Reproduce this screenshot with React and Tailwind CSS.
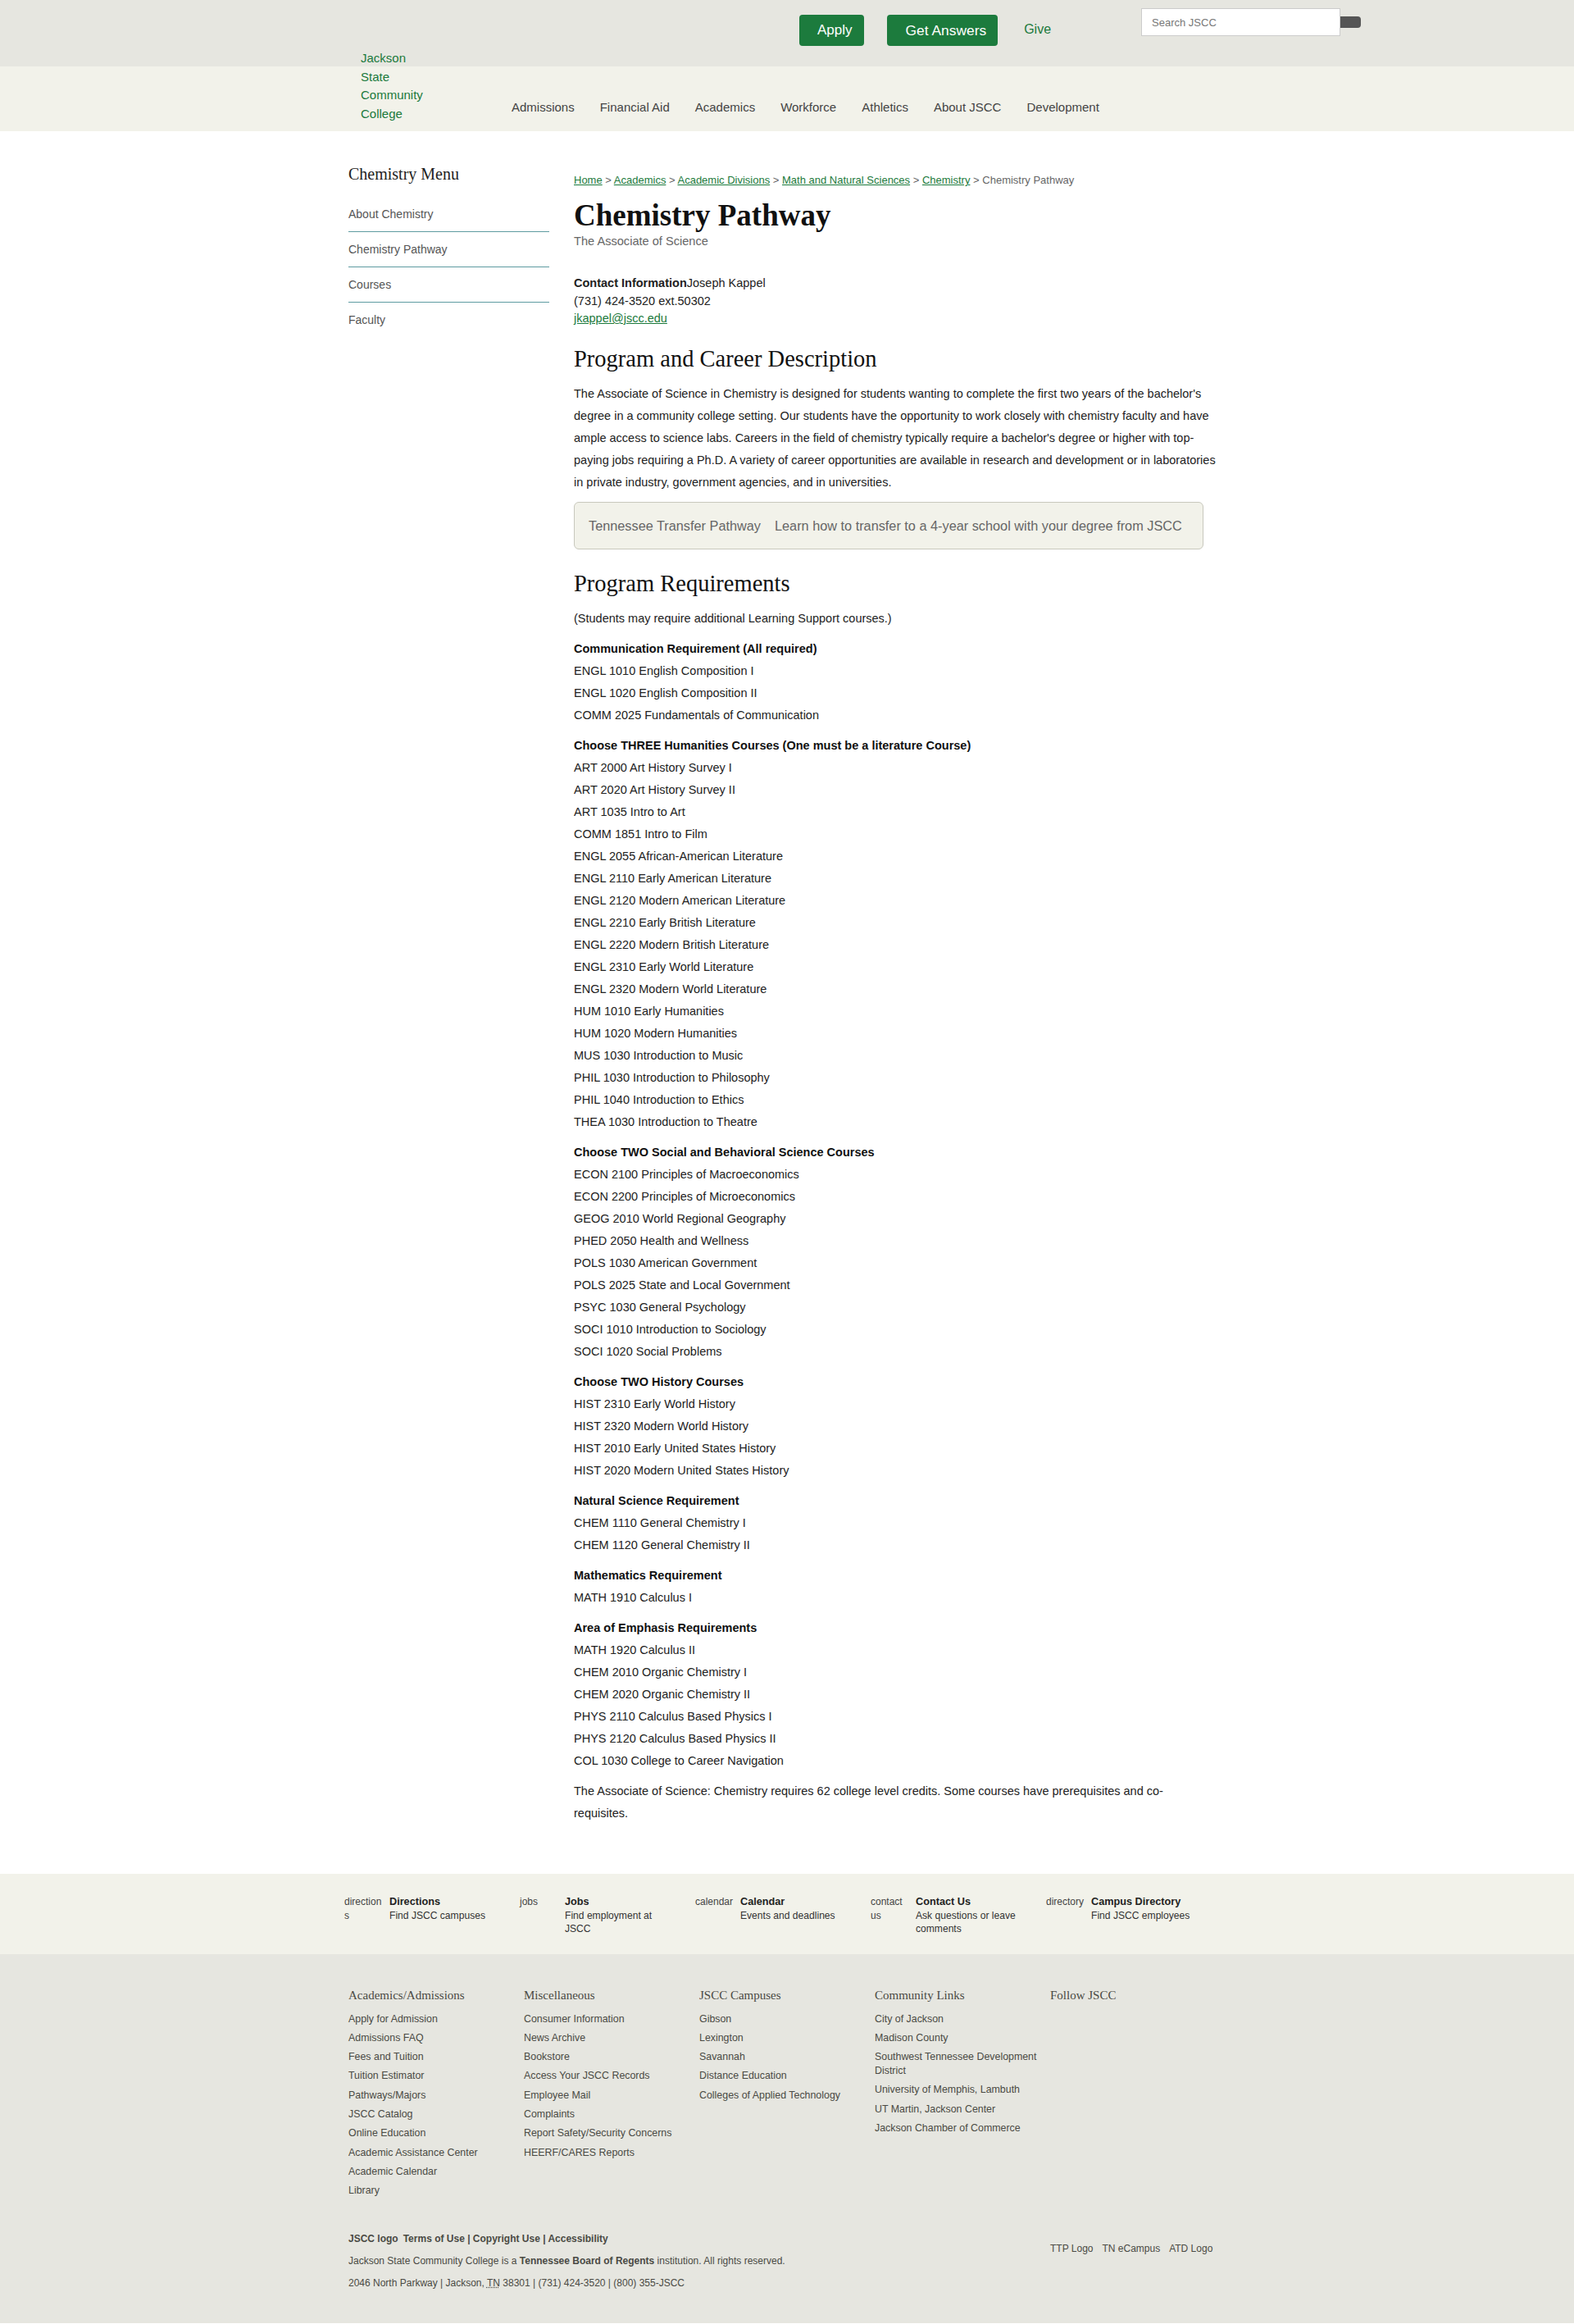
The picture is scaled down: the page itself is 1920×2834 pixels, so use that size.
import React from "react";

const sans = { fontFamily: '"Liberation Sans", Arial, sans-serif' };

const crumbs = [
  "Home",
  "Academics",
  "Academic Divisions",
  "Math and Natural Sciences",
  "Chemistry",
];

const sideMenu = ["About Chemistry", "Chemistry Pathway", "Courses", "Faculty"];

const navItems = [
  "Admissions",
  "Financial Aid",
  "Academics",
  "Workforce",
  "Athletics",
  "About JSCC",
  "Development",
];

const requirements = [
  {
    title: "Communication Requirement (All required)",
    courses: [
      "ENGL 1010 English Composition I",
      "ENGL 1020 English Composition II",
      "COMM 2025 Fundamentals of Communication",
    ],
  },
  {
    title: "Choose THREE Humanities Courses (One must be a literature Course)",
    courses: [
      "ART 2000 Art History Survey I",
      "ART 2020 Art History Survey II",
      "ART 1035 Intro to Art",
      "COMM 1851 Intro to Film",
      "ENGL 2055 African-American Literature",
      "ENGL 2110 Early American Literature",
      "ENGL 2120 Modern American Literature",
      "ENGL 2210 Early British Literature",
      "ENGL 2220 Modern British Literature",
      "ENGL 2310 Early World Literature",
      "ENGL 2320 Modern World Literature",
      "HUM 1010 Early Humanities",
      "HUM 1020 Modern Humanities",
      "MUS 1030 Introduction to Music",
      "PHIL 1030 Introduction to Philosophy",
      "PHIL 1040 Introduction to Ethics",
      "THEA 1030 Introduction to Theatre",
    ],
  },
  {
    title: "Choose TWO Social and Behavioral Science Courses",
    courses: [
      "ECON 2100 Principles of Macroeconomics",
      "ECON 2200 Principles of Microeconomics",
      "GEOG 2010 World Regional Geography",
      "PHED 2050 Health and Wellness",
      "POLS 1030 American Government",
      "POLS 2025 State and Local Government",
      "PSYC 1030 General Psychology",
      "SOCI 1010 Introduction to Sociology",
      "SOCI 1020 Social Problems",
    ],
  },
  {
    title: "Choose TWO History Courses",
    courses: [
      "HIST 2310 Early World History",
      "HIST 2320 Modern World History",
      "HIST 2010 Early United States History",
      "HIST 2020 Modern United States History",
    ],
  },
  {
    title: "Natural Science Requirement",
    courses: ["CHEM 1110 General Chemistry I", "CHEM 1120 General Chemistry II"],
  },
  {
    title: "Mathematics Requirement",
    courses: ["MATH 1910 Calculus I"],
  },
  {
    title: "Area of Emphasis Requirements",
    courses: [
      "MATH 1920 Calculus II",
      "CHEM 2010 Organic Chemistry I",
      "CHEM 2020 Organic Chemistry II",
      "PHYS 2110 Calculus Based Physics I",
      "PHYS 2120 Calculus Based Physics II",
      "COL 1030 College to Career Navigation",
    ],
  },
];

const quickLinks = [
  { icon: "directions", title: "Directions", text: "Find JSCC campuses" },
  { icon: "jobs", title: "Jobs", text: "Find employment at JSCC" },
  { icon: "calendar", title: "Calendar", text: "Events and deadlines" },
  { icon: "contact us", title: "Contact Us", text: "Ask questions or leave comments" },
  { icon: "directory", title: "Campus Directory", text: "Find JSCC employees" },
];

const footerCols = [
  {
    title: "Academics/Admissions",
    links: [
      "Apply for Admission",
      "Admissions FAQ",
      "Fees and Tuition",
      "Tuition Estimator",
      "Pathways/Majors",
      "JSCC Catalog",
      "Online Education",
      "Academic Assistance Center",
      "Academic Calendar",
      "Library",
    ],
  },
  {
    title: "Miscellaneous",
    links: [
      "Consumer Information",
      "News Archive",
      "Bookstore",
      "Access Your JSCC Records",
      "Employee Mail",
      "Complaints",
      "Report Safety/Security Concerns",
      "HEERF/CARES Reports",
    ],
  },
  {
    title: "JSCC Campuses",
    links: ["Gibson", "Lexington", "Savannah", "Distance Education", "Colleges of Applied Technology"],
  },
  {
    title: "Community Links",
    links: [
      "City of Jackson",
      "Madison County",
      "Southwest Tennessee Development District",
      "University of Memphis, Lambuth",
      "UT Martin, Jackson Center",
      "Jackson Chamber of Commerce",
    ],
  },
  { title: "Follow JSCC", links: [] },
];

const Header = () => (
  <header>
    <div className="bg-[#e6e6e0] h-[81px]">
      <div className="w-[1070px] mx-auto relative flex items-start">
        <a
          href="#"
          className="absolute left-[15px] top-[60px] w-[85px] text-[15px] leading-[22.5px] text-[#1b7a3c] z-10"
        >
          Jackson State Community College
        </a>
        <a
          href="#"
          className="shrink-0 ml-[550px] mt-[18px] h-[38px] flex items-center pl-[22px] pr-[14px] rounded-[4px] bg-[#1c7b3d] text-white text-[17px]"
        >
          Apply
        </a>
        <a
          href="#"
          className="shrink-0 ml-[28px] mt-[18px] h-[38px] flex items-center pl-[23px] pr-[14px] rounded-[4px] bg-[#1c7b3d] text-white text-[17.4px]"
        >
          Get Answers
        </a>
        <a href="#" className="shrink-0 ml-[32px] mt-[26px] text-[16px] leading-[20px] text-[#1b7a3c]">
          Give
        </a>
        <div className="shrink-0 ml-[110px] mt-[10px] flex items-start">
          <input
            placeholder="Search JSCC"
            className="w-[243px] h-[34px] bg-white border border-[#cccccc] px-[12px] text-[13px] text-[#555] placeholder:text-[#777] outline-none"
          />
          <button className="mt-[10px] w-[25px] h-[14px] bg-[#555555] rounded-r-[4px]" aria-label="Search" />
        </div>
      </div>
    </div>
    <div className="bg-[#f2f2ea] h-[79px]">
      <div className="w-[1070px] mx-auto h-full flex items-center pl-[199px] pt-[21px] gap-[31px]">
        {navItems.map((item) => (
          <a key={item} href="#" className="text-[15px] text-[#444444] leading-[18px]">
            {item}
          </a>
        ))}
      </div>
    </div>
  </header>
);

const Sidebar = () => (
  <aside className="w-[245px] shrink-0 pt-[40px]">
    <h2 className="text-[20px] leading-[24px] text-[#222]" style={{ fontFamily: '"Liberation Serif", serif' }}>
      Chemistry Menu
    </h2>
    <ul className="mt-[16px]">
      {sideMenu.map((item, i) => (
        <li
          key={item}
          className={
            i < sideMenu.length - 1
              ? "border-b border-[#5e9ba1] py-[11px] text-[14px] leading-[20px] text-[#555]"
              : "py-[11px] text-[14px] leading-[20px] text-[#555]"
          }
        >
          <a href="#">{item}</a>
        </li>
      ))}
    </ul>
  </aside>
);

const Main = () => (
  <main className="w-[795px] ml-[30px] pt-[51px] text-[#222]">
    <div className="text-[13px] leading-[18px] text-[#666]">
      {crumbs.map((c) => (
        <span key={c}>
          <a href="#" className="text-[#1b7a3c] underline">
            {c}
          </a>
          {" > "}
        </span>
      ))}
      <span>Chemistry Pathway</span>
    </div>
    <h1
      className="mt-[13px] text-[37px] leading-[42px] font-bold text-[#111]"
      style={{ fontFamily: '"Liberation Serif", serif' }}
    >
      Chemistry Pathway
    </h1>
    <p className="mt-[1px] text-[14.6px] leading-[18px] text-[#666]">The Associate of Science</p>

    <div className="mt-[32px] text-[14.5px] leading-[21.5px]">
      <div>
        <strong>Contact Information</strong>Joseph Kappel
      </div>
      <div>(731) 424-3520 ext.50302</div>
      <a href="#" className="text-[#1b7a3c] underline">
        jkappel@jscc.edu
      </a>
    </div>

    <h2
      className="mt-[21px] text-[28.5px] leading-[34px] text-[#111]"
      style={{ fontFamily: '"Liberation Serif", serif' }}
    >
      Program and Career Description
    </h2>
    <p className="mt-[12.5px] text-[14.5px] leading-[27px]">
      The Associate of Science in Chemistry is designed for students wanting to complete the first two years of the
      bachelor's degree in a community college setting. Our students have the opportunity to work closely with
      chemistry faculty and have ample access to science labs. Careers in the field of chemistry typically require a
      bachelor's degree or higher with top-paying jobs requiring a Ph.D. A variety of career opportunities are
      available in research and development or in laboratories in private industry, government agencies, and in
      universities.
    </p>

    <a
      href="#"
      className="mt-[9.5px] flex w-[768px] items-center gap-[17px] border border-[#c8c8bd] rounded-[6px] bg-[#f2f2ea] px-[17px] py-[18px] text-[16.3px] leading-[20px] text-[#666]"
    >
      <span>Tennessee Transfer Pathway</span>
      <span>Learn how to transfer to a 4-year school with your degree from JSCC</span>
    </a>

    <h2
      className="mt-[25px] text-[28.5px] leading-[34px] text-[#111]"
      style={{ fontFamily: '"Liberation Serif", serif' }}
    >
      Program Requirements
    </h2>
    <div className="mt-[12.5px] text-[14.5px] leading-[27px]">
      <p className="mb-[10px]">(Students may require additional Learning Support courses.)</p>
      {requirements.map((group) => (
        <p key={group.title} className="mb-[10px]">
          <strong className="text-[#111]">{group.title}</strong>
          {group.courses.map((c) => (
            <span key={c} className="block">
              {c}
            </span>
          ))}
        </p>
      ))}
      <p className="mb-[60px] max-w-[760px]">
        The Associate of Science: Chemistry requires 62 college level credits. Some courses have prerequisites and
        co-requisites.
      </p>
    </div>
  </main>
);

const QuickLinks = () => (
  <div className="bg-[#f2f2ea] h-[98px]">
    <div className="w-[1080px] mx-auto grid grid-cols-[repeat(5,214px)] pt-[26px]">
      {quickLinks.map((q) => (
        <a key={q.title} href="#" className="flex items-start">
          <span className="w-[48px] shrink-0 break-words text-[12px] leading-[16.5px] text-[#444]">{q.icon}</span>
          <span className="ml-[7px] w-[130px]">
            <span className="block text-[12.7px] leading-[16.5px] font-bold text-[#222]">{q.title}</span>
            <span className="block text-[12.1px] leading-[16.5px] text-[#333]">{q.text}</span>
          </span>
        </a>
      ))}
    </div>
  </div>
);

const Footer = () => (
  <footer className="bg-[#e6e6e0] pt-[41px] pb-[41px] text-[#4a4a44]">
    <div className="w-[1070px] mx-auto">
      <div className="grid grid-cols-[repeat(5,214px)]">
        {footerCols.map((col) => (
          <div key={col.title} className="pr-[10px]">
            <h3 className="text-[15px] leading-[18px] text-[#4a4a44]" style={{ fontFamily: '"Liberation Serif", serif' }}>
              {col.title}
            </h3>
            <ul className="mt-[11.5px] flex flex-col gap-[6.3px]">
              {col.links.map((l) => (
                <li key={l} className="text-[12.4px] leading-[17px]">
                  <a href="#">{l}</a>
                </li>
              ))}
            </ul>
          </div>
        ))}
      </div>

      <div className="mt-[43px] flex justify-between">
        <div className="text-[12px] leading-[15px]">
          <div className="font-bold">
            JSCC logo<span className="ml-[6px]">Terms of Use | Copyright Use | Accessibility</span>
          </div>
          <div className="mt-[12px]">
            Jackson State Community College is a <strong>Tennessee Board of Regents</strong> institution. All rights
            reserved.
          </div>
          <div className="mt-[12px]">
            2046 North Parkway | Jackson, <abbr className="underline decoration-dotted">TN</abbr> 38301 | (731)
            424-3520 | (800) 355-JSCC
          </div>
        </div>
        <div className="w-[214px] mt-[12px] flex gap-[11px] text-[12px] leading-[15px] h-[15px]">
          <span>TTP Logo</span>
          <span>TN eCampus</span>
          <span>ATD Logo</span>
        </div>
      </div>
    </div>
  </footer>
);

const App = () => {
  return (
    <div className="bg-white min-h-screen" style={sans}>
      <Header />
      <div className="w-[1070px] mx-auto flex">
        <Sidebar />
        <Main />
      </div>
      <QuickLinks />
      <Footer />
    </div>
  );
};

export default App;
